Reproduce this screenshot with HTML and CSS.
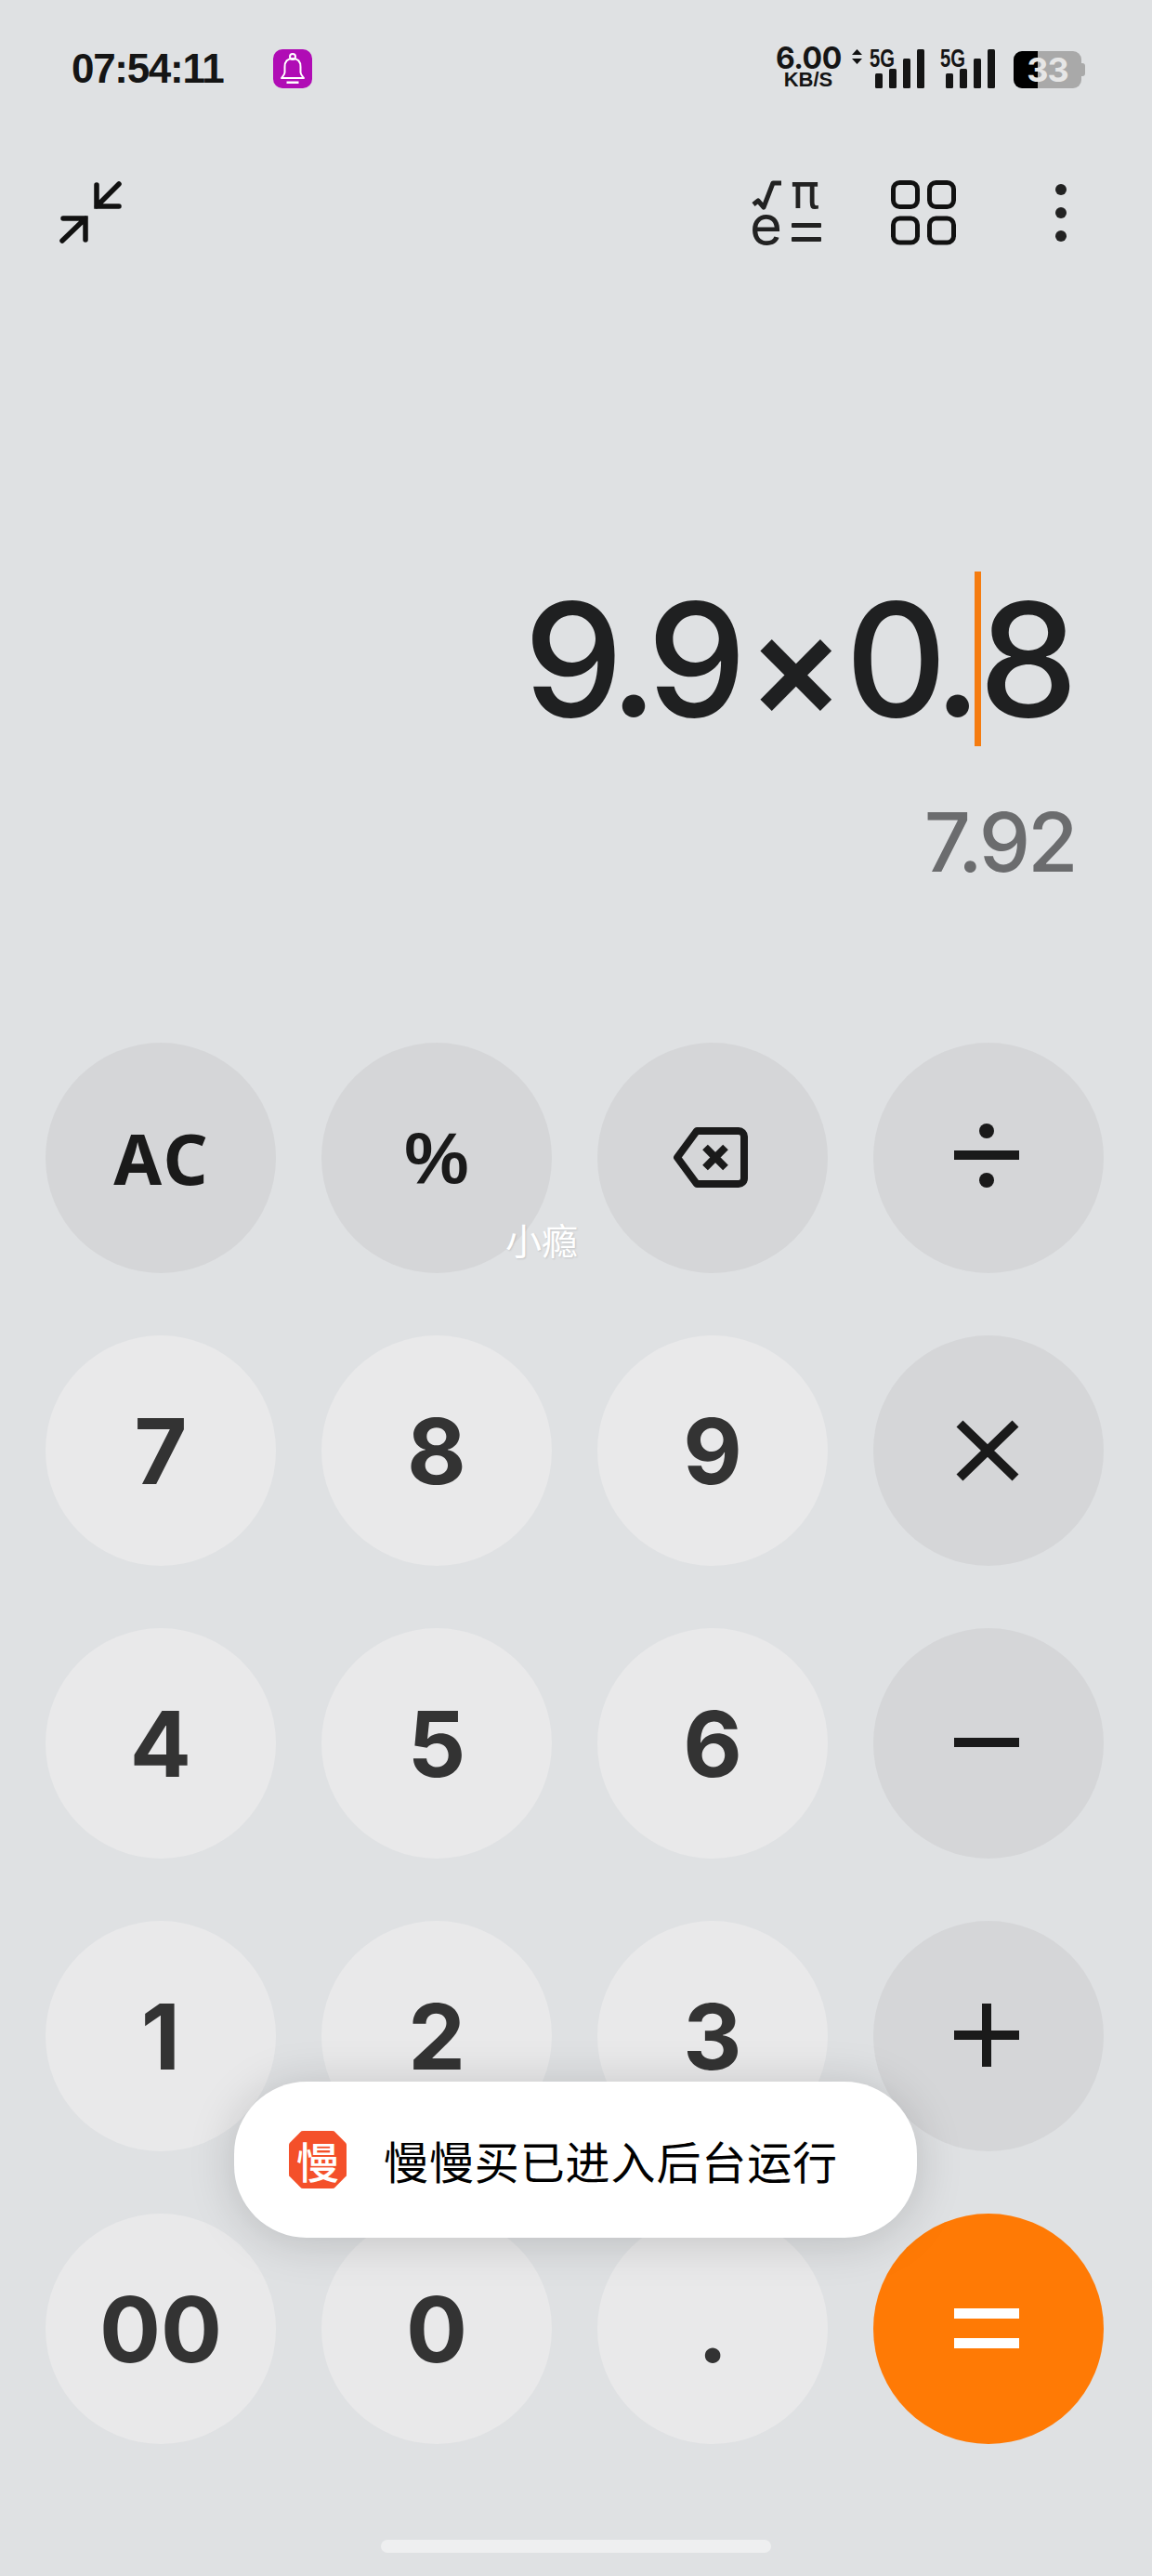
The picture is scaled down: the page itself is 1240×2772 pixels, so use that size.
FILE: index.html
```html
<!DOCTYPE html>
<html lang="zh-CN">
<head>
  <meta charset="UTF-8">
  <title>计算器</title>
  <link rel="stylesheet" href="styles.css">
</head>
<body>

  <div class="status">
    <div class="time">07:54:11</div>
    <svg class="bell" viewBox="0 0 42 42">
      <rect width="42" height="42" rx="10" fill="#b00cb5"/>
      <g fill="none" stroke="#fff" stroke-width="2" stroke-linejoin="round">
        <circle cx="21" cy="8" r="3"/>
        <path d="M21 10c-6 0-8.500 4-8.500 9v6c0 2-2 4-3.500 6h24c-1.500-2-3.500-4-3.500-6v-6c0-5-2.500-9-8.500-9z"/>
      </g>
      <rect x="14.500" y="34.500" width="13" height="2.500" fill="#fff"/>
    </svg>
    <div class="speed">
      <div class="speed-num">6.00</div>
      <div class="speed-unit">KB/S</div>
    </div>
    <svg class="updown" viewBox="0 0 11 16">
      <path d="M5.500 0L11 6H0zM5.500 16L0 10H11z" fill="#111"/>
    </svg>
    <svg class="signal" viewBox="0 -8 60 50">
      <text class="signal-type" x="0" y="19" textLength="27" lengthAdjust="spacingAndGlyphs">5G</text>
      <rect x="6" y="26" width="8" height="16" rx="1.500"/>
      <rect x="21" y="21" width="8" height="21" rx="1.500"/>
      <rect x="36" y="10" width="8" height="32" rx="1.500"/>
      <rect x="51" y="0" width="8" height="42" rx="1.500"/>
    </svg>
    <svg class="signal signal-2" viewBox="0 -8 60 50">
      <text class="signal-type" x="0" y="19" textLength="27" lengthAdjust="spacingAndGlyphs">5G</text>
      <rect x="6" y="26" width="8" height="16" rx="1.500"/>
      <rect x="21" y="21" width="8" height="21" rx="1.500"/>
      <rect x="36" y="10" width="8" height="32" rx="1.500"/>
      <rect x="51" y="0" width="8" height="42" rx="1.500"/>
    </svg>
    <div class="battery">33</div>
  </div>

  <div class="toolbar">
    <svg class="tool-collapse" viewBox="60 190 80 80">
      <g fill="none" stroke="#111" stroke-width="5.500" stroke-linecap="round">
        <path d="M68 235H92V258M92 235L67 259"/>
        <path d="M104 199V222H128M104 222L128 198"/>
      </g>
    </svg>
    <svg class="tool-math" viewBox="805 160 85 120">
      <path d="M811 220L816 216L822 223L832 197H841" fill="none" stroke="#222" stroke-width="5" stroke-linejoin="round"/>
      <text class="math-pi" x="851" y="224">π</text>
      <text class="math-e" x="807" y="264">e</text>
      <rect x="852" y="240" width="32" height="5" rx="1" fill="#222"/>
      <rect x="852" y="255" width="32" height="5" rx="1" fill="#222"/>
    </svg>
    <svg class="tool-grid" viewBox="955 190 80 80">
      <g fill="none" stroke="#111" stroke-width="5">
        <rect x="961.500" y="196.500" width="26" height="26" rx="7"/>
        <rect x="1000.500" y="196.500" width="26" height="26" rx="7"/>
        <rect x="961.500" y="235" width="26" height="26" rx="7"/>
        <rect x="1000.500" y="235" width="26" height="26" rx="7"/>
      </g>
    </svg>
    <svg class="tool-more" viewBox="1130 190 24 80">
      <circle cx="1142" cy="204" r="6" fill="#222"/>
      <circle cx="1142" cy="229" r="6" fill="#222"/>
      <circle cx="1142" cy="254" r="6" fill="#222"/>
    </svg>
  </div>

  <div class="display">
    <div class="expr">9.9<span class="times">×</span>0.<span class="caret"></span>8</div>
    <div class="result">7.92</div>
  </div>

  <div class="keypad">
    <button class="key fn ac">AC</button>
    <button class="key fn pct">%</button>
    <button class="key fn">
      <svg class="op" viewBox="0 0 100 100">
        <path d="M33 21H78a6 6 0 0 1 6 6V72a6 6 0 0 1-6 6H33L12 49.500z" fill="none" stroke="#1a1a1a" stroke-width="8" stroke-linejoin="round"/>
        <path d="M42 38.500L64 60.500M64 38.500L42 60.500" fill="none" stroke="#1a1a1a" stroke-width="8"/>
      </svg>
    </button>
    <button class="key fn">
      <svg class="op" viewBox="0 0 100 100">
        <rect x="13" y="42" width="70" height="10" fill="#1a1a1a"/>
        <circle cx="48" cy="21" r="8" fill="#1a1a1a"/>
        <circle cx="48" cy="74" r="8" fill="#1a1a1a"/>
      </svg>
    </button>

    <button class="key">7</button>
    <button class="key">8</button>
    <button class="key">9</button>
    <button class="key fn">
      <svg class="op" viewBox="0 0 100 100">
        <path d="M19 21L79 79M79 21L19 79" fill="none" stroke="#1a1a1a" stroke-width="10"/>
      </svg>
    </button>

    <button class="key">4</button>
    <button class="key">5</button>
    <button class="key">6</button>
    <button class="key fn">
      <svg class="op" viewBox="0 0 100 100">
        <rect x="13" y="44" width="70" height="10" fill="#1a1a1a"/>
      </svg>
    </button>

    <button class="key">1</button>
    <button class="key">2</button>
    <button class="key">3</button>
    <button class="key fn">
      <svg class="op" viewBox="0 0 100 100">
        <rect x="13" y="44" width="70" height="10" fill="#1a1a1a"/>
        <rect x="43" y="15" width="10" height="68" fill="#1a1a1a"/>
      </svg>
    </button>

    <button class="key">00</button>
    <button class="key">0</button>
    <button class="key">.</button>
    <button class="key equal">
      <svg class="op" viewBox="0 0 100 100">
        <rect x="13" y="28" width="70" height="11" fill="#fff"/>
        <rect x="13" y="60" width="70" height="11" fill="#fff"/>
      </svg>
    </button>
  </div>

  <div class="home-bar"></div>

  <div class="watermark">小瘾</div>

  <div class="toast">
    <div class="toast-icon">慢</div>
    <div class="toast-text">慢慢买已进入后台运行</div>
  </div>

</body>
</html>
```

FILE: styles.css
```css
body {
  position: relative;
  width: 1240px;
  height: 2772px;
  margin: 0;
  overflow: hidden;
  background-color: #dfe1e3;
  font-family: 'Inter', sans-serif;
}

.status {
  display: flex;
  align-items: flex-start;
  height: 42px;
  padding: 53px 72px 0 77px;
}

.time {
  width: 162px;
  font-family: 'Liberation Sans', sans-serif;
  font-size: 44px;
  font-weight: bold;
  line-height: 42px;
  letter-spacing: -1.300px;
  white-space: nowrap;
  color: #151515;
}

.bell {
  width: 42px;
  height: 42px;
  margin-left: 55px;
}

.speed {
  margin-left: auto;
  margin-top: -3px;
  width: 70px;
  text-align: center;
  color: #151515;
}

.speed-num {
  font-size: 32px;
  font-weight: 700;
  line-height: 26px;
  letter-spacing: -0.500px;
}

.speed-unit {
  font-family: 'Liberation Sans', sans-serif;
  font-size: 22px;
  font-weight: bold;
  line-height: 20px;
}

.updown {
  width: 11px;
  height: 16px;
  margin-left: 12px;
}

.signal {
  width: 60px;
  height: 50px;
  margin-top: -8px;
  margin-left: 8px;
  fill: #151515;
}

.signal-2 {
  margin-left: 16px;
}

.signal-type {
  font-family: 'Liberation Sans', sans-serif;
  font-size: 27px;
  font-weight: bold;
}

.battery {
  position: relative;
  width: 73px;
  height: 40px;
  margin: 2px 4px 0 19px;
  border-radius: 9px;
  background: linear-gradient(90deg, #000 26px, #a9a9a9 26px);
  font-size: 36px;
  font-weight: 700;
  line-height: 40px;
  letter-spacing: -1px;
  text-align: center;
  color: #e6e6e6;
}

.battery::after {
  content: "";
  position: absolute;
  top: 13px;
  right: -4px;
  width: 4px;
  height: 14px;
  border-radius: 0 3px 3px 0;
  background-color: #a9a9a9;
}

.toolbar {
  display: flex;
  height: 80px;
  margin-top: 95px;
  padding-left: 60px;
}

.toolbar svg {
  height: 80px;
}

.toolbar .tool-math {
  width: 85px;
  height: 120px;
  margin-top: -30px;
  margin-left: auto;
}

.tool-collapse {
  width: 80px;
}

.tool-grid {
  width: 80px;
  margin-left: 65px;
}

.tool-more {
  width: 24px;
  margin-left: 95px;
  margin-right: 86px;
}

.math-pi {
  font-family: 'DejaVu Sans', sans-serif;
  font-size: 52px;
  fill: #222;
}

.math-e {
  font-size: 60px;
  fill: #222;
}

.display {
  margin-top: 345px;
  padding-right: 89.500px;
  text-align: right;
}

.expr {
  height: 188px;
  font-size: 170px;
  font-weight: 500;
  line-height: 188px;
  letter-spacing: -10px;
  white-space: nowrap;
  color: #1f2021;
}

.times {
  margin: 0 11px;
  font-size: 155px;
  font-weight: 600;
}

.caret {
  display: inline-block;
  width: 7px;
  height: 188px;
  margin: 0 -2px 0 2px;
  vertical-align: top;
  background-color: #f57c10;
}

.result {
  margin-top: 53px;
  margin-right: -7px;
  font-size: 88px;
  font-weight: 500;
  line-height: 100px;
  letter-spacing: -3px;
  color: #6b6c6e;
}

.keypad {
  display: grid;
  grid-template-columns: repeat(4, 248px);
  grid-auto-rows: 248px;
  column-gap: 49px;
  row-gap: 67px;
  margin-top: 166px;
  padding-left: 49px;
}

.key {
  display: flex;
  align-items: center;
  justify-content: center;
  padding: 0;
  border: none;
  border-radius: 50%;
  background-color: #e9e9ea;
  font-family: 'Inter', sans-serif;
  font-size: 98px;
  font-weight: 650;
  color: #333;
}

.fn {
  background-color: #d5d6d8;
  color: #1a1a1a;
}

.ac {
  font-family: 'Noto Sans', sans-serif;
  font-size: 75px;
  font-weight: 700;
  letter-spacing: 3px;
  text-indent: 3px;
}

.pct {
  font-family: 'Liberation Sans', sans-serif;
  font-size: 78px;
  font-weight: 700;
}

.equal {
  background-color: #ff7a05;
}

.op {
  width: 100px;
  height: 100px;
}

.home-bar {
  width: 420px;
  height: 14px;
  margin: 103px auto 0;
  border-radius: 7px;
  background-color: #eeeff0;
}

.watermark {
  position: absolute;
  left: 544px;
  top: 1310px;
  font-family: 'Noto Sans CJK SC', sans-serif;
  font-size: 39px;
  font-weight: 400;
  line-height: 46px;
  color: #fff;
  text-shadow: 1px 1px 2px rgba(0, 0, 0, 0.12);
}

.toast {
  position: absolute;
  left: 252px;
  top: 2240px;
  display: flex;
  align-items: center;
  width: 735px;
  height: 168px;
  padding-left: 59px;
  box-sizing: border-box;
  border-radius: 78px;
  background-color: #fff;
  box-shadow: 0 4px 50px rgba(0, 0, 0, 0.17);
}

.toast-icon {
  width: 62px;
  height: 62px;
  border-radius: 16px;
  clip-path: polygon(22% 0, 78% 0, 100% 22%, 100% 78%, 78% 100%, 22% 100%, 0 78%, 0 22%);
  background-color: #f4502a;
  font-family: 'Noto Sans CJK SC', sans-serif;
  font-size: 46px;
  font-weight: 500;
  line-height: 62px;
  text-align: center;
  color: #fff;
}

.toast-text {
  margin-left: 40px;
  font-family: 'Noto Sans CJK SC', sans-serif;
  font-size: 48px;
  line-height: 60px;
  letter-spacing: 0.900px;
  white-space: nowrap;
  color: #000;
}
```
